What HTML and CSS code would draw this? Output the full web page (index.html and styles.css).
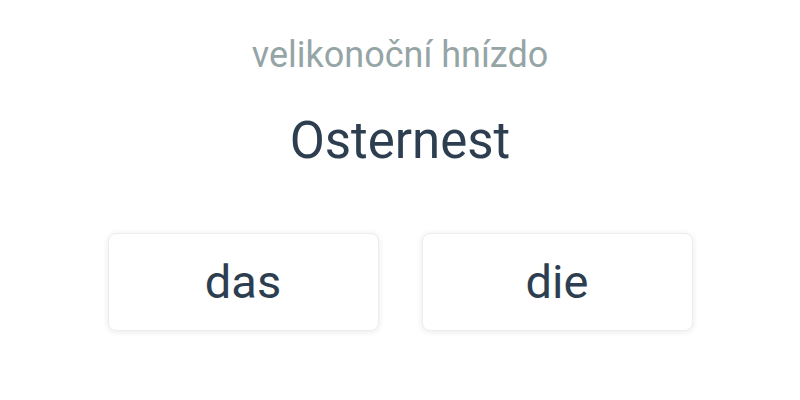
FILE: index.html
```html
<!DOCTYPE html>
<html lang="cs">
<head>
<meta charset="utf-8">
<link rel="stylesheet" href="styles.css">
</head>
<body>
<main class="card">
  <div class="hint">velikonoční hnízdo</div>
  <div class="word">Osternest</div>
  <div class="choices">
    <button class="choice">das</button>
    <button class="choice">die</button>
  </div>
</main>
</body>
</html>
```

FILE: styles.css
```css
html, body {
  margin: 0;
  padding: 0;
  background: #ffffff;
}
body {
  font-family: Roboto, "Noto Sans", sans-serif;
  width: 800px;
  height: 400px;
}
.card {
  display: flex;
  flex-direction: column;
  align-items: center;
  padding-top: 32px;
}
.hint {
  font-size: 36px;
  line-height: 46px;
  color: #95a5a6;
}
.word {
  margin-top: 33px;
  font-size: 51px;
  line-height: 60px;
  color: #2c3e50;
}
.choices {
  margin-top: 62px;
  display: flex;
  gap: 43px;
}
.choice {
  width: 271px;
  height: 98px;
  box-sizing: border-box;
  background: #ffffff;
  border: 1px solid #ededed;
  border-radius: 8px;
  box-shadow: 0 1px 6px rgba(0, 0, 0, 0.09);
  font-family: Roboto, "Noto Sans", sans-serif;
  font-size: 47px;
  color: #2c3e50;
  padding: 0 0 2px 0;
  cursor: pointer;
}
```
